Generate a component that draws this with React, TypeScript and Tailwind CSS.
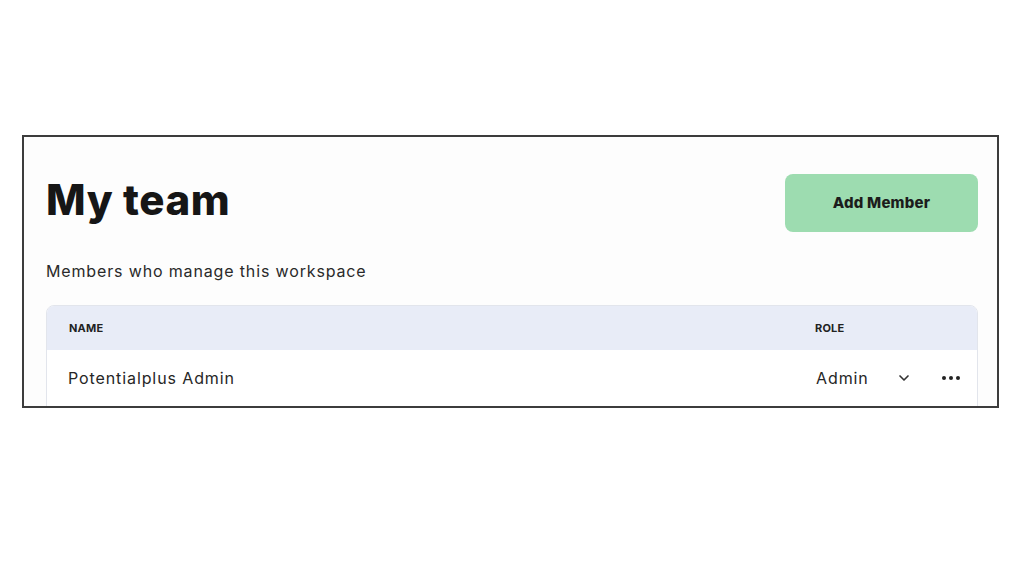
import { ChevronDown } from "lucide-react";

const font = { fontFamily: "Inter, 'Open Sans', sans-serif" };

export default function App() {
  return (
    <div className="w-[1024px] h-[576px] bg-white pt-[135px] pl-[22px]" style={font}>
      <div className="w-[977px] h-[273px] border-2 border-[#3c3c3c] bg-[#fdfdfd] overflow-hidden pl-[22px] pr-[19px]">
        <div className="flex justify-between items-start pt-[37px]">
          <h1 className="text-[42px] leading-[50px] font-extrabold tracking-[0.6px] text-[#161616] mt-[1px]">My team</h1>
          <button className="w-[193px] h-[58px] rounded-lg bg-[#9ddcb0] text-[15px] font-extrabold tracking-[0.2px] text-[#1c1c1c]">
            Add Member
          </button>
        </div>
        <p className="mt-[27px] text-[16px] text-[#2a2a2a] tracking-[0.85px]">Members who manage this workspace</p>
        <div className="mt-[22px] border border-[#e2e5ec] rounded-t-lg overflow-hidden">
          <div className="h-[44px] bg-[#e8ecf7] flex items-center pl-[22px] text-[11px] font-bold text-[#222] tracking-[0.2px]">
            <span className="flex-1">NAME</span>
            <span className="w-[162px]">ROLE</span>
          </div>
          <div className="h-[80px] bg-white flex items-start pt-[16px] pl-[21px] text-[16px] text-[#262626]">
            <span className="flex-1 tracking-[0.9px]">Potentialplus Admin</span>
            <div className="w-[162px] flex items-center">
              <span className="tracking-[0.9px] ml-[1px]">Admin</span>
              <ChevronDown className="ml-[27px] w-4 h-4 text-[#333]" strokeWidth={2.5} />
              <span className="ml-[30px] flex gap-[3px]">
                <span className="w-1 h-1 rounded-full bg-[#222]" />
                <span className="w-1 h-1 rounded-full bg-[#222]" />
                <span className="w-1 h-1 rounded-full bg-[#222]" />
              </span>
            </div>
          </div>
        </div>
      </div>
    </div>
  );
}
